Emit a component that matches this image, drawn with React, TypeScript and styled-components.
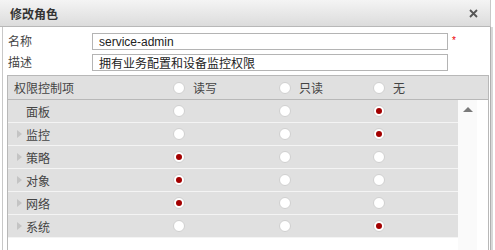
import styled, { createGlobalStyle } from 'styled-components'

const GlobalStyle = createGlobalStyle`
  body {
    margin: 0;
    background: #fff;
    font-family: "Liberation Sans", "Noto Sans CJK SC", sans-serif;
    font-size: 12px;
    color: #333;
  }
`

type Level = 'rw' | 'ro' | 'none'

const rows: { name: string; expandable: boolean; value: Level }[] = [
  { name: '面板', expandable: false, value: 'none' },
  { name: '监控', expandable: true, value: 'none' },
  { name: '策略', expandable: true, value: 'rw' },
  { name: '对象', expandable: true, value: 'rw' },
  { name: '网络', expandable: true, value: 'rw' },
  { name: '系统', expandable: true, value: 'none' },
]

const levels: { key: Level; label: string }[] = [
  { key: 'rw', label: '读写' },
  { key: 'ro', label: '只读' },
  { key: 'none', label: '无' },
]

const Radio = ({ checked }: { checked?: boolean }) => (
  <RadioCircle>{checked && <RadioDot />}</RadioCircle>
)

const App = () => {
  return (
    <>
      <GlobalStyle />
      <Dialog>
        <TitleBar>
          <Title>修改角色</Title>
          <CloseButton>
            <svg width="9" height="9" viewBox="0 0 9 9">
              <path d="M1 1 L8 8 M8 1 L1 8" stroke="#555" strokeWidth="1.8" />
            </svg>
          </CloseButton>
        </TitleBar>

        <Body>
          <FormRow>
            <Label>名称</Label>
            <Input defaultValue="service-admin" />
            <Required>*</Required>
          </FormRow>
          <FormRow>
            <Label>描述</Label>
            <Input defaultValue="拥有业务配置和设备监控权限" />
          </FormRow>

          <PermBox>
            <HeaderRow>
              <HeaderCell>权限控制项</HeaderCell>
              {levels.map((l) => (
                <OptionCell key={l.key}>
                  <Radio />
                  <OptionText>{l.label}</OptionText>
                </OptionCell>
              ))}
            </HeaderRow>
            <PermBody>
              <RowList>
                {rows.map((r) => (
                  <PermRow key={r.name}>
                    <NameCell>
                      <Arrow $visible={r.expandable} />
                      {r.name}
                    </NameCell>
                    {levels.map((l) => (
                      <OptionCell key={l.key}>
                        <Radio checked={r.value === l.key} />
                      </OptionCell>
                    ))}
                  </PermRow>
                ))}
              </RowList>
              <ScrollTrack>
                <UpArrow />
              </ScrollTrack>
              <ScrollGutter />
            </PermBody>
          </PermBox>
        </Body>
      </Dialog>
    </>
  )
}

const Dialog = styled.div`
  width: 495px;
  height: 250px;
  overflow: hidden;
  display: flex;
  flex-direction: column;
`

const TitleBar = styled.div`
  flex-shrink: 0;
  height: 27px;
  width: 491px;
  display: flex;
  align-items: center;
  justify-content: space-between;
  padding: 0 10px;
  box-sizing: border-box;
  background: linear-gradient(#f4f4f4, #dcdcdc);
  border-bottom: 1px solid #b8b8b8;
  border-right: 1px solid #c8c8c8;
`

const Title = styled.div`
  font-weight: bold;
  font-size: 12px;
  color: #333;
`

const CloseButton = styled.div`
  display: flex;
  margin-right: 2px;
`

const Body = styled.div`
  flex: 1;
  min-height: 0;
  margin-left: 2px;
  width: 489px;
  box-sizing: border-box;
  border-left: 1px solid #c8c8c8;
  border-right: 1px solid #b0b0b0;
  box-shadow: 2px 0 0 #d8d8d8;
  padding: 6px 2px 0 4px;
`

const FormRow = styled.div`
  display: flex;
  align-items: center;
  height: 17px;
  margin-bottom: 4px;
`

const Label = styled.div`
  width: 84px;
  padding-left: 1px;
  margin-top: -3px;
  color: #444;
`

const Input = styled.input`
  width: 356px;
  height: 17px;
  box-sizing: border-box;
  border: 1px solid #b4b4b4;
  padding: 0 6px;
  font-family: "Liberation Sans", "Noto Sans CJK SC", sans-serif;
  font-size: 12px;
  color: #222;
  outline: none;
`

const Required = styled.span`
  color: #e00;
  font-size: 10px;
  margin-left: 4px;
  margin-top: -2px;
`

const PermBox = styled.div`
  margin-top: 2px;
  width: 482px;
  border: 1px solid #b8b8b8;
  border-bottom: none;
  box-sizing: border-box;
`

const HeaderRow = styled.div`
  display: grid;
  grid-template-columns: 165px 106px 94px 1fr;
  align-items: center;
  height: 23px;
  background: #e0e0e0;
  border-bottom: 1px solid #b8b8b8;
`

const HeaderCell = styled.div`
  padding-left: 6px;
  color: #444;
`

const OptionCell = styled.div`
  display: flex;
  align-items: center;
`

const OptionText = styled.span`
  margin-left: 8px;
  color: #444;
`

const RadioCircle = styled.span`
  flex-shrink: 0;
  width: 12px;
  height: 12px;
  box-sizing: border-box;
  border-radius: 50%;
  background: #fff;
  border: 1px solid #d0d0d0;
  display: flex;
  align-items: center;
  justify-content: center;
`

const RadioDot = styled.span`
  width: 6px;
  height: 6px;
  border-radius: 50%;
  background: #a30000;
`

const PermBody = styled.div`
  display: flex;
  height: 150px;
`

const RowList = styled.div`
  width: 450px;
  display: flex;
  flex-direction: column;
`

const PermRow = styled.div`
  display: grid;
  grid-template-columns: 165px 106px 94px 1fr;
  align-items: center;
  height: 22px;
  flex-shrink: 0;
  background: #e0e0e0;
  border-bottom: 1px solid #f4f4f4;
`

const NameCell = styled.div`
  display: flex;
  align-items: center;
  padding-left: 9px;
  color: #444;
`

const Arrow = styled.span<{ $visible: boolean }>`
  width: 0;
  height: 0;
  border-top: 4px solid transparent;
  border-bottom: 4px solid transparent;
  border-left: 5px solid ${(p) => (p.$visible ? '#c4c4c4' : 'transparent')};
  margin-right: 4px;
`

const ScrollTrack = styled.div`
  width: 19px;
  background: #fafafa;
  display: flex;
  justify-content: center;
  padding-top: 7px;
  box-sizing: border-box;
`

const UpArrow = styled.span`
  width: 0;
  height: 0;
  border-left: 5px solid transparent;
  border-right: 5px solid transparent;
  border-bottom: 5px solid #7a7a7a;
`

const ScrollGutter = styled.div`
  flex: 1;
  background: #fff;
`

export default App
